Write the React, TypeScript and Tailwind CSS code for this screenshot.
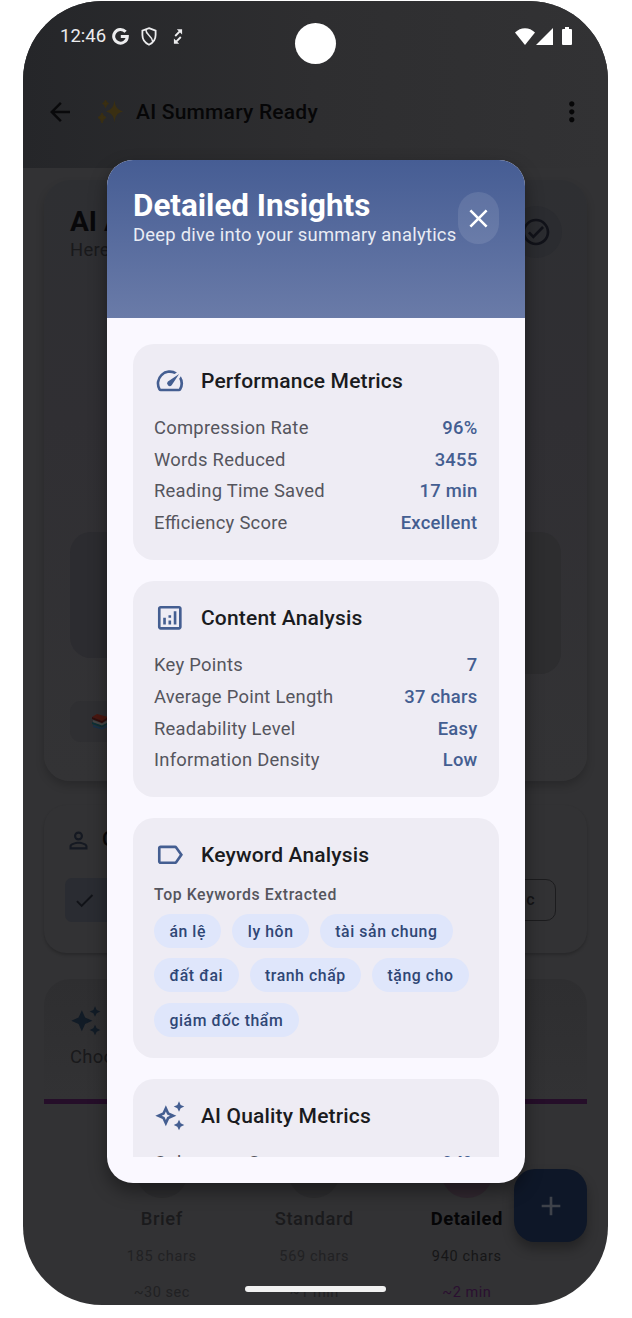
import type { ReactNode } from "react";
import {
  MdAdd,
  MdArrowBack,
  MdAutoAwesome,
  MdCheck,
  MdClose,
  MdMoreVert,
  MdOutlineAnalytics,
  MdOutlineAutoAwesome,
  MdOutlineCheckCircle,
  MdOutlineLabel,
  MdOutlineSpeed,
  MdPersonOutline,
} from "react-icons/md";

type Metric = [label: string, value: string];

const performance: Metric[] = [
  ["Compression Rate", "96%"],
  ["Words Reduced", "3455"],
  ["Reading Time Saved", "17 min"],
  ["Efficiency Score", "Excellent"],
];

const content: Metric[] = [
  ["Key Points", "7"],
  ["Average Point Length", "37 chars"],
  ["Readability Level", "Easy"],
  ["Information Density", "Low"],
];

const keywords = ["án lệ", "ly hôn", "tài sản chung", "đất đai", "tranh chấp", "tặng cho", "giám đốc thẩm"];

function InsightCard({ icon, title, children }: { icon: ReactNode; title: string; children: ReactNode }) {
  return (
    <section className="shrink-0 rounded-[21px] bg-[#eeecf4] p-[21px]">
      <div className="mb-[15.8px] flex h-[31.6px] items-center gap-[15px] text-[31.6px] text-[#445e91]">
        {icon}
        <h2 className="pt-[0.6px] pl-[0.4px] text-[21px] leading-[28px] font-medium tracking-[0.17px] text-[#1a1b20]">{title}</h2>
      </div>
      {children}
    </section>
  );
}

function Metrics({ rows }: { rows: Metric[] }) {
  return (
    <dl>
      {rows.map(([label, value]) => (
        <div key={label} className="flex h-[31.7px] items-center justify-between text-[18.4px] leading-[26.4px] tracking-[0.26px] [font-feature-settings:'liga'_1]">
          <dt className="text-[#55555d]">{label}</dt>
          <dd className="font-medium text-[#445e91]">{value}</dd>
        </div>
      ))}
    </dl>
  );
}

function StatusBar() {
  return (
    <div className="flex h-[70px] items-center pl-[37px] pr-[36px] text-[#ececee]">
      <span className="pt-[1px] text-[18.5px]">12:46</span>
      <svg className="ml-[6px] h-[17px] w-[17px]" viewBox="0 0 17 17" fill="none" stroke="currentColor" strokeWidth="3">
        <path d="M13.600 3.800A6.800 6.800 0 1 0 15.300 8.600H8.800" />
      </svg>
      <svg className="ml-[12px] h-[19px] w-[16px]" viewBox="0 0 16 19" fill="none" stroke="currentColor" strokeWidth="1.8">
        <path d="M8 1.200 14.600 3.600V8C14.600 12.600 11.800 16 8 17.700 4.200 16 1.400 12.600 1.400 8V3.600Z" />
        <path d="M4.800 2.600C4.800 8.500 11.500 8.500 11.800 15" strokeWidth="1.600" />
      </svg>
      <svg className="ml-[16px] h-[17px] w-[10px]" viewBox="0 0 10 17" fill="none" stroke="currentColor" strokeWidth="1.900">
        <path d="M7 3.200 2.200 8M7.800 9 3 13.800" />
        <path d="M3.800 1.200H9.100V6.500ZM.900 10.500V15.800H6.200Z" fill="currentColor" stroke="none" />
      </svg>
      <svg className="ml-auto h-[17px] w-[20px]" viewBox="0 0 20 17" fill="#fff">
        <path d="M10 17 0 4.600Q4.400.300 10 .300T20 4.600Z" />
      </svg>
      <svg className="ml-[1px] h-[17px] w-[17px]" viewBox="0 0 17 17" fill="#fff">
        <path d="M17 0V17H0Z" />
      </svg>
      <svg className="ml-[9px] h-[18px] w-[10px]" viewBox="0 0 10 18" fill="#fff">
        <path d="M3 0H7V2H9Q10 2 10 3V17Q10 18 9 18H1Q0 18 0 17V3Q0 2 1 2H3Z" />
      </svg>
    </div>
  );
}

function LengthOption({ name, chars, time, selected = false }: { name: string; chars: string; time: string; selected?: boolean }) {
  return (
    <div className={selected ? "flex w-[152.500px] flex-col items-center text-[#161617]" : "flex w-[152.500px] flex-col items-center text-[#212123]"}>
      <div className={selected ? "h-[52px] w-[52px] rounded-full bg-[#30272f]" : "h-[52px] w-[52px] rounded-full bg-[#2d2d2f]"} />
      <div className={selected ? "mt-[9px] text-[18.400px] leading-[23px] font-bold tracking-[0.500px] text-[#050506]" : "mt-[9px] text-[18.400px] leading-[23px] font-medium tracking-[0.600px] text-[#1a1a1c]"}>{name}</div>
      <div className="mt-[17px] text-[14.500px] leading-[20px] tracking-[0.650px]">{chars}</div>
      <div className={selected ? "mt-[16px] text-[14.500px] leading-[20px] tracking-[0.500px] text-[#2a0f30]" : "mt-[16px] text-[14.500px] leading-[20px] tracking-[0.500px]"}>{time}</div>
    </div>
  );
}

function SummaryScreen() {
  return (
    <div className="flex h-full flex-col">
      <header className="h-[167px] shrink-0 bg-linear-to-r from-[#252629] via-[#2e2e30] to-[#323234]">
        <StatusBar />
        <div className="flex h-[82px] items-center pl-[22px] pr-[20px] text-[#060607]">
          <MdArrowBack className="text-[30px] text-[#09090b]" />
          <svg className="ml-[23px] h-[26px] w-[26px]" viewBox="0 0 26 26" fill="#3a2f12">
            <path d="M16.500 1C17.500 8 18.500 10 25 12.500 18.500 14.500 17.500 16.500 16.500 23.500 15.500 16.500 14 14.500 8 12.500 14 10 15.500 8 16.500 1Z" />
            <path d="M4 14Q5 17.500 8 18.500 5 19.500 4 24 3 19.500 0 18.500 3 17.500 4 14ZM7.500 1Q8 3.500 10.500 4.500 8 5.500 7.500 8.500 7 5.500 4.500 4.500 7 3.500 7.500 1Z" stroke="#3a2f12" strokeWidth="1" strokeLinejoin="round" />
          </svg>
          <h1 className="ml-[12px] pt-[2px] text-[21px] font-medium tracking-[0.220px]">AI Summary Ready</h1>
          <MdMoreVert className="ml-auto text-[31.600px]" />
        </div>
      </header>

      <div className="flex flex-col px-[21px] pt-[12px]">
        <section className="h-[601px] rounded-[26px] bg-linear-to-b from-[#2e2f32] via-[#302f33] via-40% to-[#333335] px-[26px] pt-[26px] shadow-[0_5px_9px_rgba(0,0,0,0.18)]">
          <div className="flex justify-between">
            <div>
              <div className="text-[28px] leading-[32px] font-bold text-[#08080a]">AI A</div>
              <div className="text-[18.400px] leading-[24px] tracking-[0.260px] text-[#19191b]">Here</div>
            </div>
            <div className="mr-[-1px] flex h-[52px] w-[52px] items-center justify-center rounded-full bg-[#2b2c30]">
              <MdOutlineCheckCircle className="text-[32px] text-[#111219]" />
            </div>
          </div>
          <div className="mt-[270px] flex justify-between">
            <div className="h-[126px] w-[150px] rounded-[21px] bg-[#2c2c30]" />
            <div className="h-[142px] w-[150px] rounded-[21px] bg-[#2d2d2f]" />
          </div>
          <div className="mt-[27px] flex h-[41px] w-[150px] items-center rounded-[11px] bg-[#2f2f32] pl-[21px]">
            <svg className="h-[17px] w-[18px]" viewBox="0 0 18 17">
              <path d="M1 4 6 1 17 4 11 8Z" fill="#4a1710" />
              <path d="M1 4V6L11 10 17 6V4L11 8Z" fill="#300d0b" />
              <path d="M2 7 11 10.500 17 7V9.500L11 13 2 9.500Z" fill="#454545" />
              <path d="M1 9 11 12.500 17 9.500V11L11 14.500 1 11Z" fill="#0d3035" />
              <path d="M2 12 11 15 17 12V13.500L11 16.500 2 14Z" fill="#17314a" />
            </svg>
          </div>
        </section>

        <section className="mt-[24px] h-[148px] rounded-[22px] bg-[#323234] px-[21px] pt-[20px] shadow-[0_2px_3px_rgba(0,0,0,0.2)]">
          <div className="flex h-[30px] items-center text-[#151922]">
            <MdPersonOutline className="text-[27px]" />
            <span className="ml-[10px] text-[21px] font-medium text-[#09090a]">C</span>
          </div>
          <div className="mt-[23px] flex items-center justify-between">
            <div className="flex h-[44px] w-[130px] items-center rounded-[7px] bg-[#2a2c32] pl-[8px]">
              <MdCheck className="text-[23px] text-[#111318]" />
            </div>
            <div className="mr-[10px] flex h-[42px] w-[120px] items-center justify-end rounded-[10px] border-[1.500px] border-[#1c1c1e] pr-[20px] text-[16px] font-medium text-[#141416]">c</div>
          </div>
        </section>

        <section className="mt-[26px] h-[125px] rounded-t-[26px] border-b-[5px] border-[#250e29] bg-linear-to-b from-[#2e2e30] to-[#323234] px-[26px] pt-[26px]">
          <MdAutoAwesome className="text-[31.600px] text-[#111b26]" />
          <div className="mt-[8px] text-[18.400px] leading-[24px] tracking-[0.330px] text-[#19191b]">Choo</div>
        </section>

        <div className="mt-[42px] flex pl-[41.500px]">
          <LengthOption name="Brief" chars="185 chars" time="~30 sec" />
          <LengthOption name="Standard" chars="569 chars" time="~1 min" />
          <LengthOption name="Detailed" chars="940 chars" time="~2 min" selected />
        </div>
      </div>
    </div>
  );
}

function InsightsDialog() {
  return (
    <div role="dialog" className="absolute top-[159px] left-[84px] flex h-[1023px] w-[418px] flex-col overflow-hidden rounded-[26px] bg-[#faf8ff] shadow-[0_8px_18px_rgba(0,0,0,0.4)]">
      <header className="flex h-[158px] shrink-0 items-start justify-between bg-linear-to-b from-[#465d94] to-[#6a7ba8] pt-[26px] pr-[26px] pl-[26px]">
        <div className="w-[325px] whitespace-nowrap">
          <h1 className="pt-[1px] text-[31.400px] leading-[38px] font-bold text-white">Detailed Insights</h1>
          <p className="-mt-[3px] text-[18.400px] leading-[26px] tracking-[0.245px] text-[#e9ecf4]">Deep dive into your summary analytics</p>
        </div>
        <button className="mt-[6px] flex h-[52px] w-[41px] shrink-0 items-center justify-center rounded-[21px] bg-white/10">
          <MdClose className="shrink-0 text-[31px] text-white" />
        </button>
      </header>
      <main className="mr-[26.500px] ml-[26px] mt-[26px] mb-[26px] flex min-h-0 flex-1 flex-col gap-[21px] overflow-hidden">
        <InsightCard icon={<MdOutlineSpeed />} title="Performance Metrics">
          <Metrics rows={performance} />
        </InsightCard>
        <InsightCard icon={<MdOutlineAnalytics />} title="Content Analysis">
          <Metrics rows={content} />
        </InsightCard>
        <InsightCard icon={<MdOutlineLabel />} title="Keyword Analysis">
          <h3 className="-mt-[3px] mb-[9px] text-[15.800px] leading-[21px] font-medium tracking-[0.580px] text-[#55555d]">Top Keywords Extracted</h3>
          <div className="flex flex-wrap gap-x-[11px] gap-y-[10.500px]">
            {keywords.map((word) => (
              <span key={word} className="flex h-[34px] items-center rounded-full bg-[#dfe6fb] px-[15.400px] pt-[1px] text-[15.800px] leading-[21px] font-medium tracking-[0.580px] text-[#2f4675]">
                {word}
              </span>
            ))}
          </div>
        </InsightCard>
        <InsightCard icon={<MdOutlineAutoAwesome />} title="AI Quality Metrics">
          <Metrics rows={[["Coherence Score", "94%"]]} />
        </InsightCard>
      </main>
    </div>
  );
}

export default function App() {
  return (
    <div className="h-[1318px] w-[632px] overflow-hidden bg-white pt-px pl-[23px] font-['Roboto',sans-serif]">
      <div className="relative h-[1304px] w-[584.500px] overflow-hidden rounded-[79px] bg-[#323234]">
        <SummaryScreen />
        <div className="absolute top-[22px] left-[272px] h-[41px] w-[41px] rounded-full bg-white" />
        <button className="absolute top-[1168px] left-[491px] flex h-[73px] w-[73px] items-center justify-center rounded-[21px] bg-[#0e1728] text-[#3e424a] shadow-[0_7px_12px_rgba(0,0,0,0.3)]">
          <MdAdd className="text-[32px]" />
        </button>
        <InsightsDialog />
        <div className="absolute top-[1285px] left-[222px] h-[6px] w-[141px] rounded-full bg-[#f1f1f1]" />
      </div>
    </div>
  );
}
